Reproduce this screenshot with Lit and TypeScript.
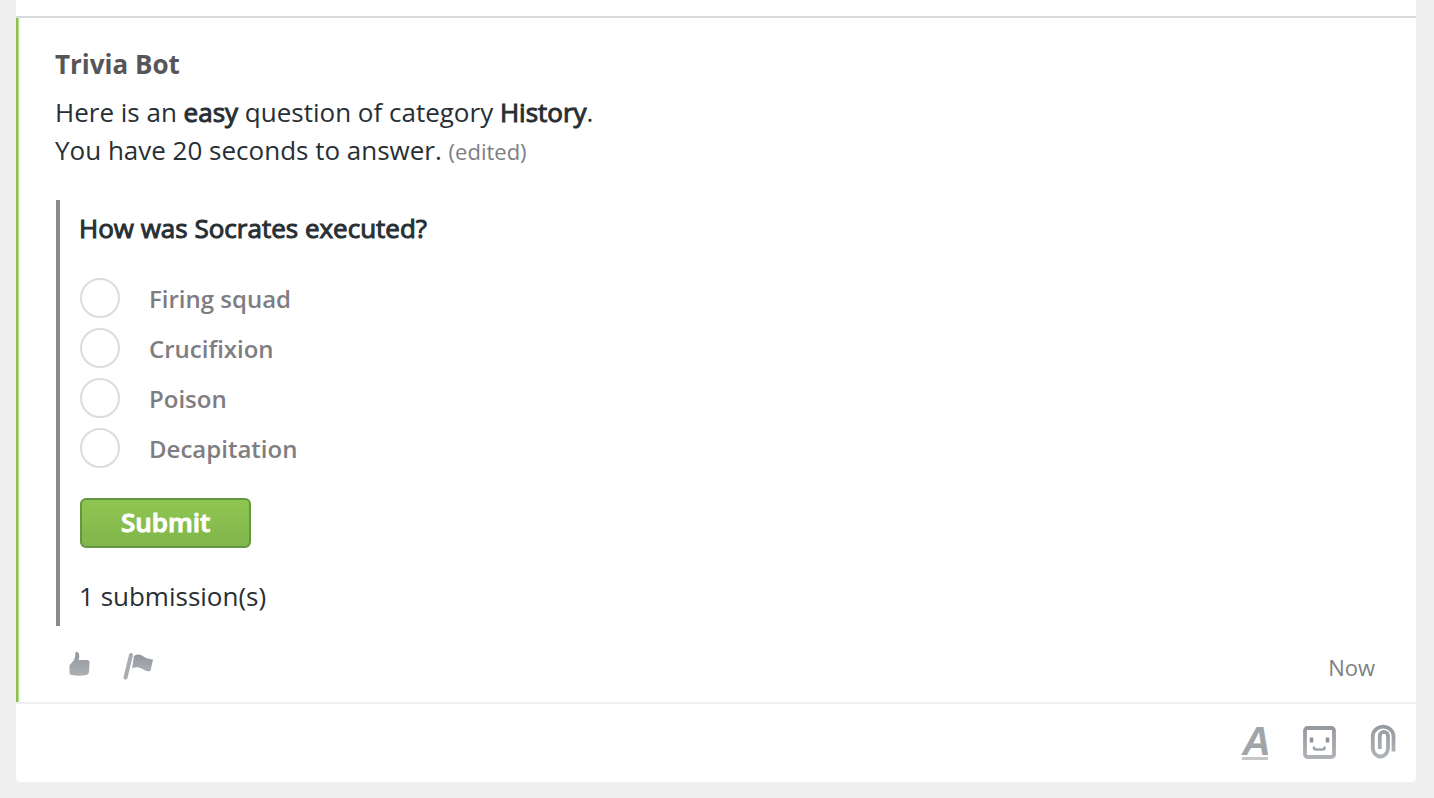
import { LitElement, html, css } from "lit";
import { customElement, property, state } from "lit/decorators.js";

@customElement("trivia-poll")
class TriviaPoll extends LitElement {
  static styles = css`
    :host {
      display: block;
    }
    .poll {
      margin: 0;
      border-left: 4px solid #8a8a8a;
      padding: 9px 20px 11px 19px;
    }
    .question {
      margin: 0;
      font-size: 26px;
      line-height: 38px;
      -webkit-text-stroke: 1px currentColor;
    }
    .options {
      display: grid;
      gap: 10px;
      margin: 0;
      padding: 31px 0 30px 1px;
      border: 0;
    }
    .option {
      display: flex;
      align-items: flex-start;
      gap: 29px;
      height: 40px;
      font-size: 24px;
      line-height: 42px;
      font-weight: 600;
      color: #7e7e82;
    }
    .radio {
      appearance: none;
      box-sizing: border-box;
      width: 40px;
      height: 40px;
      margin: 0;
      border: 2px solid #dcdcdc;
      border-radius: 50%;
      background: #fff;
    }
    .radio:checked {
      border: 12px solid #84bb4b;
    }
    .submit {
      display: block;
      box-sizing: border-box;
      height: 50px;
      margin: 0 0 0 1px;
      padding: 0 39px 2px;
      border: 2px solid #659641;
      border-radius: 6px;
      background: linear-gradient(#8fc651, #80b64b);
      color: #fff;
      font-family: inherit;
      font-size: 26px;
      line-height: 44px;
      font-weight: 600;
      -webkit-text-stroke: 1px currentColor;
    }
    .count {
      margin: 0;
      padding-top: 29px;
      font-size: 26px;
      line-height: 38px;
    }
  `;

  @property() question = "";
  @property({ attribute: false }) options: string[] = [];
  @property({ type: Number }) submissions = 0;
  @state() private choice = "";

  private submit(e: Event) {
    e.preventDefault();
    if (this.choice) this.submissions += 1;
  }

  render() {
    return html`
      <form class="poll" @submit=${this.submit}>
        <p class="question" id="question">${this.question}</p>
        <fieldset class="options" aria-labelledby="question">
          ${this.options.map(
            (o) => html`
              <label class="option">
                <input class="radio" type="radio" name="answer" .value=${o} @change=${() => (this.choice = o)} />
                <span>${o}</span>
              </label>
            `
          )}
        </fieldset>
        <button class="submit" type="submit">Submit</button>
        <p class="count">${this.submissions} submission(s)</p>
      </form>
    `;
  }
}

@customElement("app-root")
class AppRoot extends LitElement {
  static styles = css`
    :host {
      display: flex;
      flex-direction: column;
      box-sizing: border-box;
      min-height: 100vh;
      padding: 0 18px 16px 16px;
      background: #efefef;
      color: #282f34;
      font-family: "Open Sans", "Noto Sans", sans-serif;
    }
    .thread {
      flex: 1;
      padding-top: 16px;
      border-radius: 0 0 4px 4px;
      background: #fff;
    }
    .message {
      border-top: 2px solid #d9dada;
      border-bottom: 2px solid #efefef;
    }
    .body {
      padding: 27px 40px 19px 39px;
      box-shadow: inset 2px 0 0 #8bc34a, inset 3px 0 0 #bfdf9b, inset 4px 0 0 #eaf4df;
    }
    .author {
      margin: 0;
      font-size: 26px;
      line-height: 38px;
      font-weight: 700;
      color: #55555a;
    }
    .text {
      margin: 0;
      padding: 10px 0 30px;
      font-size: 26px;
      line-height: 38px;
    }
    .strong {
      font-weight: 400;
      -webkit-text-stroke: 1px currentColor;
    }
    .edited {
      font-size: 22px;
      color: #7e7e82;
    }
    .attachment {
      padding-left: 1px;
    }
    .footer {
      display: flex;
      align-items: flex-start;
      gap: 30px;
      padding: 25px 1px 0 12px;
    }
    .time {
      margin-left: auto;
      font-size: 22px;
      line-height: 32px;
      color: #7e7e82;
    }
    .icon {
      display: block;
      padding: 0;
      border: 0;
      background: none;
      color: inherit;
    }
    .icon svg {
      display: block;
    }
    .composer {
      display: flex;
      align-items: center;
      gap: 34px;
      padding: 17px 20px 19px;
    }
    .draft {
      flex: 1;
      min-width: 0;
      height: 42px;
      padding: 0 20px;
      border: 0;
      outline: 0;
      background: none;
      font: inherit;
      font-size: 26px;
    }
    .format {
      width: 26px;
      height: 36px;
      border-bottom: 3px solid #c3c7ca;
      font-family: "Liberation Sans", sans-serif;
      font-size: 40px;
      line-height: 34px;
      font-weight: 700;
      font-style: italic;
      color: #a0a5aa;
    }
  `;

  private options = ["Firing squad", "Crucifixion", "Poison", "Decapitation"];

  render() {
    return html`
      <main class="thread">
        <article class="message">
          <div class="body">
            <h2 class="author">Trivia Bot</h2>
            <p class="text">
              Here is an <strong class="strong">easy</strong> question of category
              <strong class="strong">History</strong>.<br />You have 20 seconds to answer.
              <span class="edited">(edited)</span>
            </p>
            <trivia-poll
              class="attachment"
              question="How was Socrates executed?"
              .options=${this.options}
              submissions="1"
            ></trivia-poll>
            <footer class="footer">
              <button class="icon" type="button" aria-label="Like">
                <svg width="26" height="28" viewBox="0 1 26 28">
                  <defs>
                    <linearGradient id="like" x1="0" y1="0" x2="0" y2="1">
                      <stop offset="0" stop-color="#93989d" />
                      <stop offset="1" stop-color="#abafb3" />
                    </linearGradient>
                  </defs>
                  <path
                    fill="url(#like)"
                    d="M8.500 2.500 Q9 1.500 10.500 2 Q12.500 3 12.300 6 L11.800 10 L20 10 Q22.500 10 22.500 12.500 L22 22 Q21.800 24.500 19.500 25 Q11.500 26.500 4.500 25 Q2.500 24.800 2.500 23 L2.500 15.500 Q2.700 14.500 4.500 13 Q7.500 10.500 8 7 Z"
                  />
                </svg>
              </button>
              <button class="icon" type="button" aria-label="Flag">
                <svg width="32" height="30" viewBox="0 0 32 30">
                  <defs>
                    <linearGradient id="flag" x1="0" y1="0" x2="0" y2="1">
                      <stop offset="0" stop-color="#93989d" />
                      <stop offset="1" stop-color="#abafb3" />
                    </linearGradient>
                  </defs>
                  <path fill="none" stroke="#a8acb0" stroke-width="4" stroke-linecap="round" d="M8 4 L2.500 26.500" />
                  <path
                    fill="url(#flag)"
                    d="M11 5 Q15 2.500 19 4.500 Q23 8 30 8.500 L27.500 20 Q23.500 21 19.500 18 Q15 15 9 17.500 Z"
                  />
                </svg>
              </button>
              <time class="time">Now</time>
            </footer>
          </div>
        </article>
        <div class="composer">
          <input class="draft" type="text" aria-label="Message" />
          <button class="icon format" type="button" aria-label="Text formatting">A</button>
          <button class="icon" type="button" aria-label="Emoji">
            <svg width="34" height="34" viewBox="0 0 34 34" fill="none">
              <defs>
                <linearGradient id="face" x1="0" y1="0" x2="0" y2="34" gradientUnits="userSpaceOnUse">
                  <stop offset="0" stop-color="#92979c" />
                  <stop offset="1" stop-color="#b0b4b8" />
                </linearGradient>
              </defs>
              <rect x="3" y="3" width="29" height="29" rx="2.500" stroke="url(#face)" stroke-width="3.800" />
              <path stroke="#8f9499" stroke-width="3.500" d="M9.500 12.500 V17.500 M25.500 12.500 V17.500" />
              <path stroke="#a0a5aa" stroke-width="2.500" d="M12 21.500 V23 Q12 24.500 13.500 24.500 H21 Q22.500 24.500 22.500 23 V21.500" />
            </svg>
          </button>
          <button class="icon" type="button" aria-label="Attach file">
            <svg width="26" height="40" viewBox="0 0 26 40" fill="none">
              <defs>
                <linearGradient id="clip" x1="0" y1="0" x2="0" y2="36" gradientUnits="userSpaceOnUse">
                  <stop offset="0" stop-color="#92979c" />
                  <stop offset="1" stop-color="#b0b4b8" />
                </linearGradient>
              </defs>
              <path
                stroke="url(#clip)"
                stroke-width="3.800"
                d="M23.500 29.500 V13 A10.500 10 0 0 0 2.800 13 V26 A7.600 8.500 0 0 0 18 26 V14 A4 4 0 0 0 9.800 14 V27"
              />
            </svg>
          </button>
        </div>
      </main>
    `;
  }
}
